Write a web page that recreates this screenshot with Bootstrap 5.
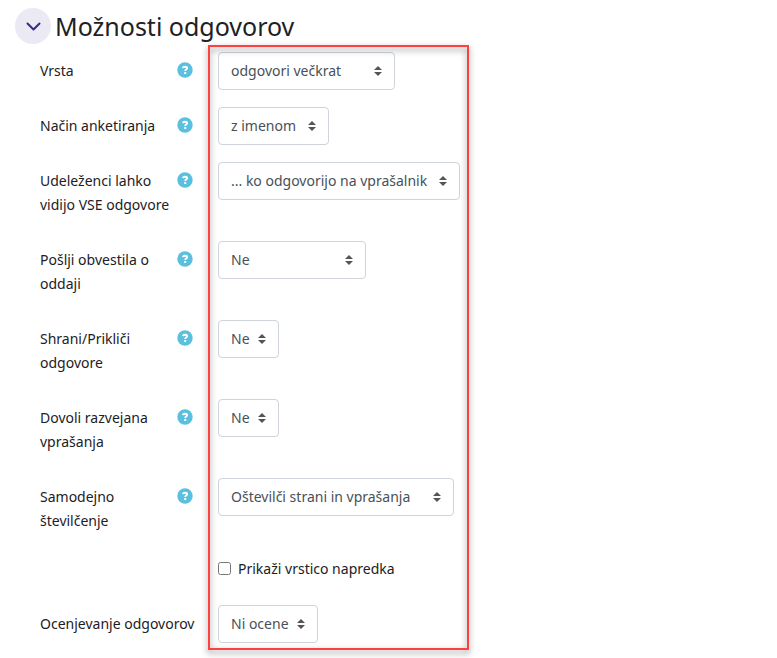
<!DOCTYPE html>
<html lang="sl">
<head>
<meta charset="utf-8">
<meta name="viewport" content="width=device-width, initial-scale=1">
<title>Možnosti odgovorov</title>
<link href="https://cdn.jsdelivr.net/npm/bootstrap@5.3.0/dist/css/bootstrap.min.css" rel="stylesheet">
<style>
  body { font-family: "Source Sans Pro", "Noto Sans", "Open Sans", sans-serif; font-size: 14px; line-height: 24px; color: #1d2125; background: #fff; }
  .section-head { padding: 8px 15px; gap: 4px; }
  .section-title { font-size: 25px; line-height: 36px; font-weight: 400; }
  .toggle { width: 36px; height: 36px; background: #ebe9f3; color: #3c2a86; }
  .options { padding: 0 15px 15px 40px; }
  .option-rows { gap: 17px; }
  .label-col { flex: 0 0 178px; padding: 7px 20px 7px 0; }
  .label-col label { flex: 1 1 0; }
  .help { width: 16px; height: 16px; margin-top: 3px; margin-right: 5px; }
  .picker { width: auto; height: 38px; font-size: 14px; line-height: 24px; color: #495057; border: 1px solid #ced4da; border-radius: 4px; padding: 6px 24px 6px 12px;
    background-image: url("data:image/svg+xml,%3csvg xmlns='http://www.w3.org/2000/svg' viewBox='0 0 8 10'%3e%3cpath fill='%23555' d='M4 0L0 4h8zM0 6l4 4 4-4z'/%3e%3c/svg%3e"); background-size: 8px 10px; background-position: right 12px center; }
  .w-type { width: 177px; }
  .w-name { width: 111px; }
  .w-view { width: 242px; }
  .w-notify { width: 148px; }
  .w-short { width: 61px; }
  .w-number { width: 236px; }
  .w-grade { width: 100px; }
  .check-row { padding-bottom: 7px; }
  .check-row input { width: 13px; height: 13px; margin: 0 7px 2px 0; }
  .highlight { top: -7px; bottom: -7px; left: 168px; width: 261px; border: 2px solid #ff4040; filter: drop-shadow(0 3px 3px rgba(0,0,0,.5)); pointer-events: none; }
</style>
<script src="https://cdn.jsdelivr.net/npm/bootstrap@5.3.0/dist/js/bootstrap.bundle.min.js" defer></script>
</head>
<body>
<svg class="d-none" aria-hidden="true">
  <symbol id="q" viewBox="0 0 16 16"><circle cx="8" cy="8" r="7.7" fill="#5bc0de"/><path d="M5.900 6.200C6.100 5.100 6.900 4.700 8 4.700c1.200 0 2.100.6 2.100 1.500 0 1.300-1.900 1.200-1.900 2.700" fill="none" stroke="#fff" stroke-width="1.900"/><rect x="7.200" y="10" width="2" height="2" fill="#fff"/></symbol>
</svg>
<main>
  <div class="section-head d-flex align-items-center">
    <button type="button" class="toggle btn rounded-circle p-0 border-0 d-flex align-items-center justify-content-center" aria-label="Strni" aria-expanded="true">
      <svg width="16" height="16" viewBox="0 0 16 16" fill="none" stroke="currentColor" stroke-width="2" stroke-linecap="round" stroke-linejoin="round"><path d="M2.500 5.500L8.500 11.500L14.500 5.500"/></svg>
    </button>
    <h3 class="section-title m-0">Možnosti odgovorov</h3>
  </div>
  <form class="options">
    <div class="option-rows d-flex flex-column position-relative">
      <div class="d-flex align-items-start">
        <div class="label-col d-flex"><label for="f1">Vrsta</label><button type="button" class="help btn p-0 border-0 d-flex" aria-label="Pomoč"><svg width="16" height="16"><use href="#q"/></svg></button></div>
        <select id="f1" class="form-select picker w-type"><option>odgovori večkrat</option></select>
      </div>
      <div class="d-flex align-items-start">
        <div class="label-col d-flex"><label for="f2">Način anketiranja</label><button type="button" class="help btn p-0 border-0 d-flex" aria-label="Pomoč"><svg width="16" height="16"><use href="#q"/></svg></button></div>
        <select id="f2" class="form-select picker w-name"><option>z imenom</option></select>
      </div>
      <div class="d-flex align-items-start">
        <div class="label-col d-flex"><label for="f3">Udeleženci lahko vidijo VSE odgovore</label><button type="button" class="help btn p-0 border-0 d-flex" aria-label="Pomoč"><svg width="16" height="16"><use href="#q"/></svg></button></div>
        <select id="f3" class="form-select picker w-view"><option>... ko odgovorijo na vprašalnik</option></select>
      </div>
      <div class="d-flex align-items-start">
        <div class="label-col d-flex"><label for="f4">Pošlji obvestila o oddaji</label><button type="button" class="help btn p-0 border-0 d-flex" aria-label="Pomoč"><svg width="16" height="16"><use href="#q"/></svg></button></div>
        <select id="f4" class="form-select picker w-notify"><option>Ne</option></select>
      </div>
      <div class="d-flex align-items-start">
        <div class="label-col d-flex"><label for="f5">Shrani/Prikliči odgovore</label><button type="button" class="help btn p-0 border-0 d-flex" aria-label="Pomoč"><svg width="16" height="16"><use href="#q"/></svg></button></div>
        <select id="f5" class="form-select picker w-short"><option>Ne</option></select>
      </div>
      <div class="d-flex align-items-start">
        <div class="label-col d-flex"><label for="f6">Dovoli razvejana vprašanja</label><button type="button" class="help btn p-0 border-0 d-flex" aria-label="Pomoč"><svg width="16" height="16"><use href="#q"/></svg></button></div>
        <select id="f6" class="form-select picker w-short"><option>Ne</option></select>
      </div>
      <div class="d-flex align-items-start">
        <div class="label-col d-flex"><label for="f7">Samodejno številčenje</label><button type="button" class="help btn p-0 border-0 d-flex" aria-label="Pomoč"><svg width="16" height="16"><use href="#q"/></svg></button></div>
        <select id="f7" class="form-select picker w-number"><option>Oštevilči strani in vprašanja</option></select>
      </div>
      <div class="d-flex">
        <div class="label-col py-0"></div>
        <div class="check-row d-flex align-items-center"><input type="checkbox" id="f8"><label for="f8">Prikaži vrstico napredka</label></div>
      </div>
      <div class="d-flex align-items-start">
        <div class="label-col pe-0 text-nowrap"><label for="f9">Ocenjevanje odgovorov</label></div>
        <select id="f9" class="form-select picker w-grade"><option>Ni ocene</option></select>
      </div>
      <div class="highlight position-absolute"></div>
    </div>
  </form>
</main>
</body>
</html>
